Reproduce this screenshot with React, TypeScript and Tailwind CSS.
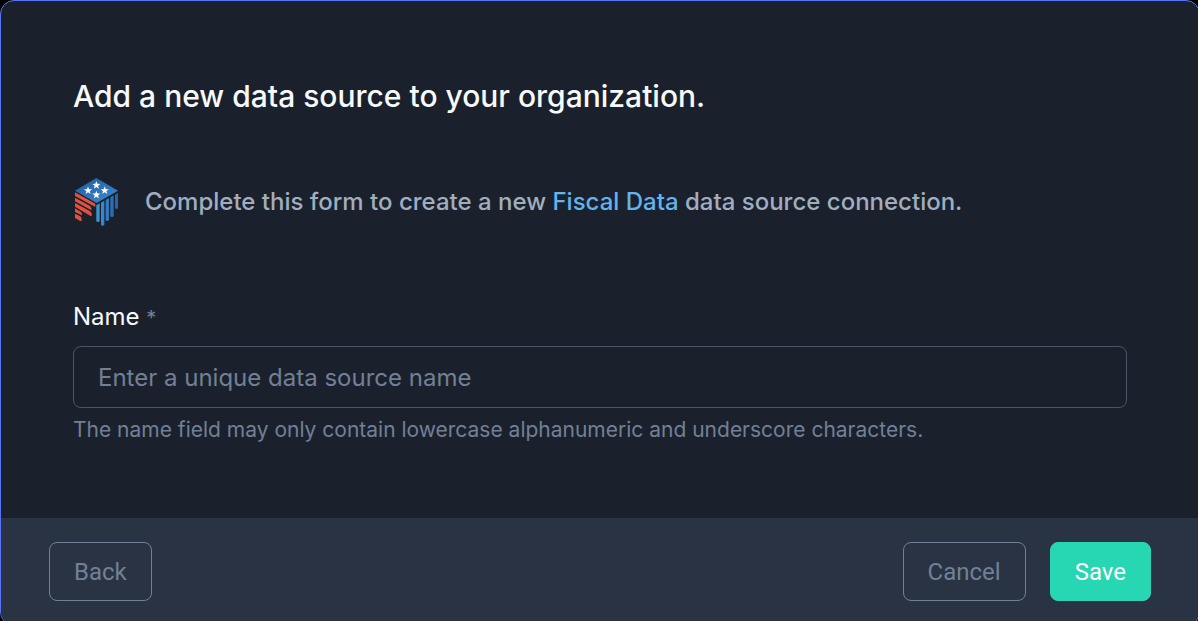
import React from "react";

function FiscalDataLogo() {
  return (
    <svg viewBox="24 24 135 144" className="h-12 w-[45px] shrink-0" role="img" aria-label="Fiscal Data">
      <defs>
        <linearGradient id="fd-top" x1="0" y1="0" x2="1" y2="1">
          <stop offset="0" stopColor="#1f5a9c" />
          <stop offset="1" stopColor="#3f8bd2" />
        </linearGradient>
        <linearGradient id="fd-bars" gradientUnits="userSpaceOnUse" x1="91" y1="0" x2="156" y2="0">
          <stop offset="0" stopColor="#3b98dc" />
          <stop offset="1" stopColor="#2560a8" />
        </linearGradient>
      </defs>
      <path d="M91 24 L156 62 L92 99 L27 62 Z" fill="url(#fd-top)" />
      <g fill="#fff">
        <path id="fd-star" d="M91 33 l3.2 8.4 9 .4 -7 5.6 2.5 8.7 -7.7-5 -7.5 5 2.5-8.7 -7-5.6 9-.4z" />
        <use href="#fd-star" x="-25" y="16" />
        <use href="#fd-star" x="25" y="16" />
        <use href="#fd-star" x="0" y="29" />
      </g>
      <g fill="#e2503f">
        <path d="M27 67 L88 101 V111 L27 78 Z" />
        <path d="M27 83 L71 107 Q78 112 76 121 L27 94 Z" />
        <path d="M27 99 L71 123 Q79 128 77 137 Q74 139 70 136 L27 110 Z" />
        <path d="M27 115 L44 125 Q49 129 48 136 L27 126 Z" />
        <path d="M27 131 L43 139 Q48 143 47 152 Q44 154 41 152 L27 144 Z" />
      </g>
      <g fill="url(#fd-bars)">
        <path d="M91 106 L101 100 V154 Q96 158 91 154 Z" />
        <path d="M105 98 L115 92 V165 Q110 169 105 165 Z" />
        <path d="M119 90 L129 84 V151 Q124 155 119 151 Z" />
        <path d="M133 82 L143 76 V139 Q138 143 133 139 Z" />
        <path d="M147 74 L156 69 V115 Q152 119 147 115 Z" />
      </g>
    </svg>
  );
}

const buttonBase =
  "h-[59px] rounded-lg border px-6 font-['Roboto',sans-serif] text-2xl";
const outlineButton = "border-[#718096] text-[#718096]";

export default function App() {
  return (
    <div className="min-h-screen overflow-hidden bg-black font-['Inter',sans-serif]">
      <form className="-mr-0.5 overflow-hidden rounded-[14px] border border-[#5a72f5] bg-[#1b212c]">
        <div className="px-[72px] pt-[75px] pb-[74px]">
          <h1 className="text-3xl leading-10 font-medium text-[#f7fafc]">
            Add a new data source to your organization.
          </h1>
          <div className="mt-[62px] flex items-center gap-[26px] pl-px">
            <FiscalDataLogo />
            <p className="text-2xl font-medium text-[#a0aec0]">
              Complete this form to create a new <span className="text-[#63b3ed]">Fiscal Data</span> data source
              connection.
            </p>
          </div>
          <label htmlFor="source-name" className="mt-[75px] block text-2xl text-[#f7fafc]">
            Name <span className="text-xl text-[#718096]">*</span>
          </label>
          <input
            id="source-name"
            type="text"
            required
            aria-describedby="source-name-help"
            placeholder="Enter a unique data source name"
            className="mt-[13px] block h-[62px] w-full rounded-lg border border-[#4a5568] bg-transparent px-6 text-2xl text-[#f7fafc] placeholder:text-[#718096]"
          />
          <p id="source-name-help" className="mt-2 text-[21px] leading-7 text-[#718096]">
            The name field may only contain lowercase alphanumeric and underscore characters.
          </p>
        </div>
        <div className="flex items-center gap-6 bg-[#2a3343] px-12 py-6">
          <button type="button" className={`${buttonBase} ${outlineButton}`}>Back</button>
          <button type="button" className={`${buttonBase} ${outlineButton} ml-auto`}>Cancel</button>
          <button type="submit" className={`${buttonBase} border-[#27d6b3] bg-[#27d6b3] text-white`}>Save</button>
        </div>
      </form>
    </div>
  );
}
